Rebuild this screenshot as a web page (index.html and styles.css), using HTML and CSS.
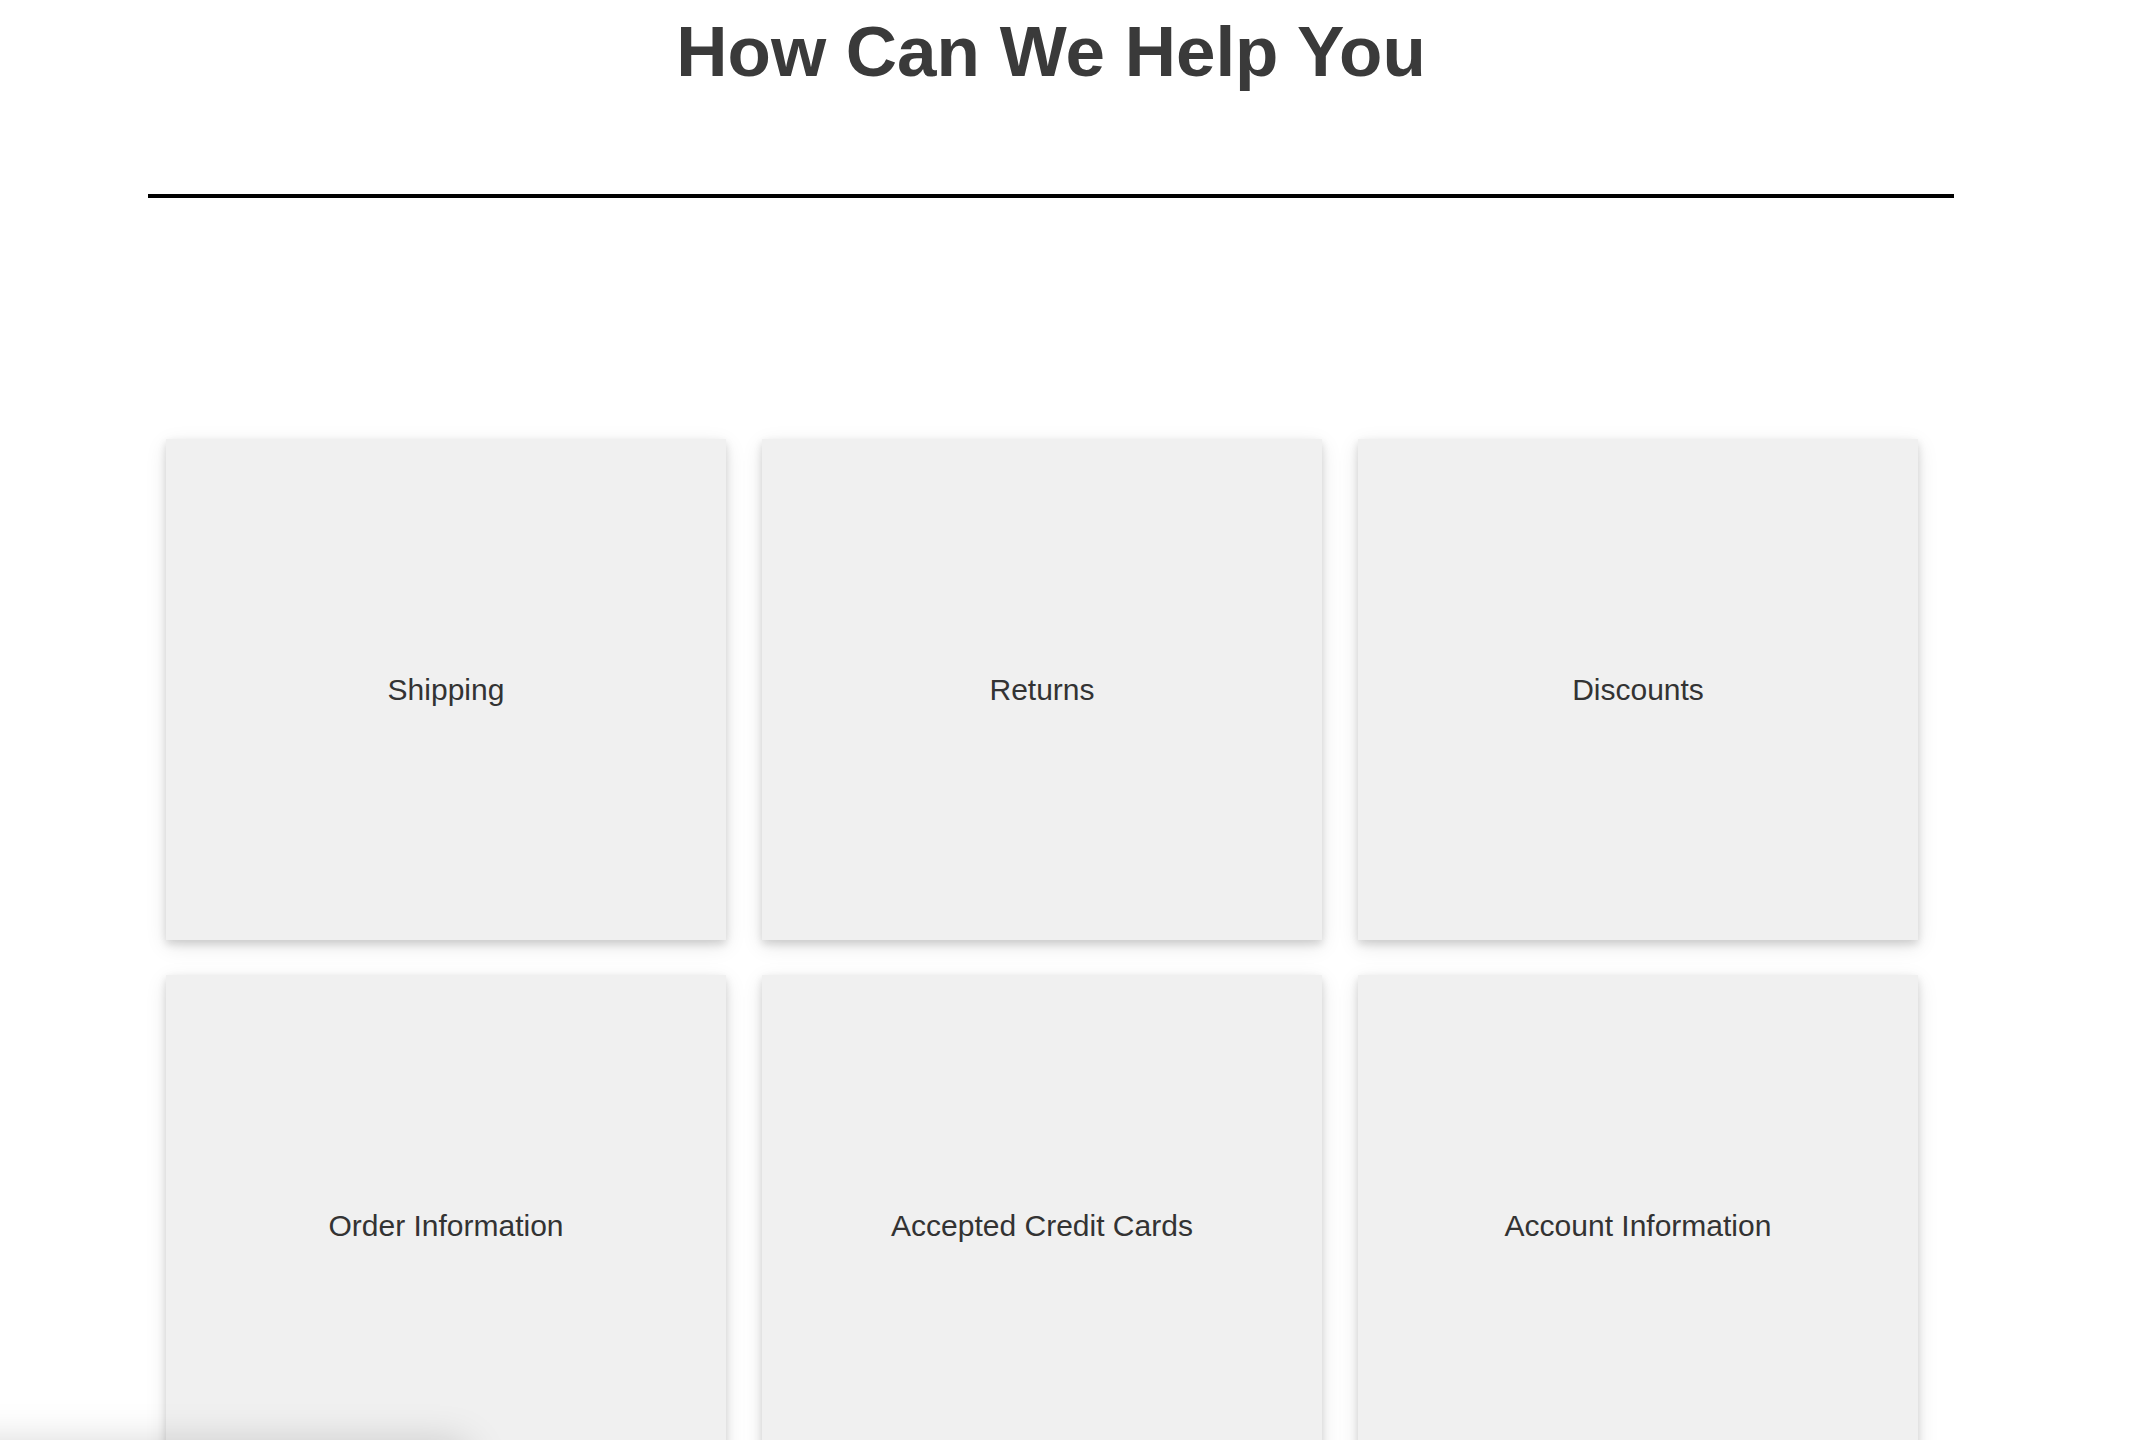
FILE: index.html
```html
<!DOCTYPE html>
<html lang="en">
<head>
<meta charset="utf-8">
<title>How Can We Help You</title>
<link rel="stylesheet" href="styles.css">
</head>
<body>
<main class="page">
  <header class="head">
    <h1 class="title">How Can We Help You</h1>
    <hr class="rule">
  </header>
  <section class="cards">
    <div class="card">Shipping</div>
    <div class="card">Returns</div>
    <div class="card">Discounts</div>
    <div class="card">Order Information</div>
    <div class="card">Accepted Credit Cards</div>
    <div class="card">Account Information</div>
  </section>
</main>
<div class="dock"></div>
</body>
</html>
```

FILE: styles.css
```css
html, body {
  margin: 0;
  padding: 0;
  background: #ffffff;
}
body {
  font-family: "Liberation Sans", Arial, Helvetica, sans-serif;
  overflow: hidden;
  height: 1440px;
}
.page {
  padding: 12px 0 0 148px;
  width: 1806px;
}
.head {
  display: flex;
  flex-direction: column;
  align-items: stretch;
}
.title {
  margin: 0;
  font-size: 71px;
  line-height: 80px;
  font-weight: 700;
  color: #3a3a3a;
  text-align: center;
}
.rule {
  margin: 102px 0 0 0;
  border: 0;
  height: 4px;
  background: #000;
}
.cards {
  margin-top: 241px;
  padding-left: 18px;
  display: grid;
  grid-template-columns: repeat(3, 560px);
  grid-auto-rows: 501px;
  column-gap: 36px;
  row-gap: 35px;
}
.card {
  background: #f0f0f0;
  box-shadow: 0 4px 8px 0 rgba(0,0,0,0.14), 0 6px 20px 0 rgba(0,0,0,0.10);
  display: flex;
  align-items: center;
  justify-content: center;
  font-size: 30px;
  color: #333333;
}
.dock {
  position: fixed;
  left: -40px;
  top: 1452px;
  width: 500px;
  height: 120px;
  background: #fff;
  box-shadow: 0 0 40px 6px rgba(0,0,0,0.2);
}
```
